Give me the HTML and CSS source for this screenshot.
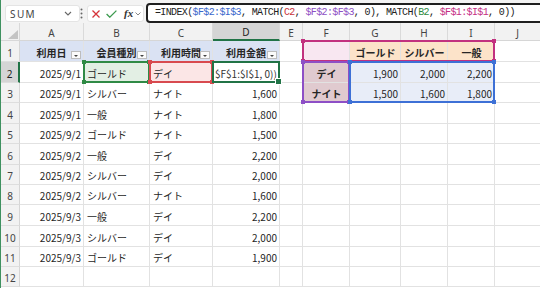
FILE: index.html
```html
<!DOCTYPE html>
<html lang="ja">
<head>
<meta charset="utf-8">
<title>Excel INDEX MATCH</title>
<link rel="stylesheet" href="styles.css">
</head>
<body>
<div class="app">
  <div class="fbar">
    <div class="namebox">
      <span class="nm">SUM</span>
      <svg class="chev" width="8" height="5" viewBox="0 0 8 5"><path d="M1 1l3 3 3-3" fill="none" stroke="#666" stroke-width="1.1"/></svg>
    </div>
    <svg class="dots" width="3" height="11" viewBox="0 0 3 11"><circle cx="1.5" cy="1.5" r="1"/><circle cx="1.5" cy="5.5" r="1"/><circle cx="1.5" cy="9.5" r="1"/></svg>
    <div class="fbtns">
      <svg class="ic-x" width="8" height="8" viewBox="0 0 8 8"><path d="M0.5 0.5l7 7M7.5 0.5l-7 7" stroke="#d6333a" stroke-width="1.3" fill="none"/></svg>
      <svg class="ic-ok" width="11" height="8" viewBox="0 0 11 8"><path d="M0.6 4l3.2 3.2 6.6-6.6" stroke="#3c9a4e" stroke-width="1.3" fill="none"/></svg>
      <span class="fx">fx</span>
      <svg class="chev2" width="6" height="4" viewBox="0 0 6 4"><path d="M0.5 0.5l2.5 2.5 2.5-2.5" fill="none" stroke="#888" stroke-width="1"/></svg>
    </div>
    <div class="formula">=INDEX(<span class="k-blue">$F$2:$I$3</span>, MATCH(<span class="k-red">C2</span>, <span class="k-purple">$F$2:$F$3</span>, 0), MATCH(<span class="k-green">B2</span>, <span class="k-mag">$F$1:$I$1</span>, 0))</div>
  </div>

  <div class="sheetwrap">
    <div class="sheet">
      <div class="corner"><svg width="10" height="9" viewBox="0 0 10 9"><path d="M10 0V9H0Z" fill="#c4c4c4"/></svg></div>
      <div class="ch">A</div><div class="ch">B</div><div class="ch">C</div><div class="ch sel">D</div><div class="ch">E</div><div class="ch">F</div><div class="ch">G</div><div class="ch">H</div><div class="ch">I</div><div class="ch">J</div>

      <div class="rh">1</div>
      <div class="c th">利用日<span class="fb"><svg width="4" height="2" viewBox="0 0 4 2"><path d="M0 0h4L2 2z" fill="#444"/></svg></span></div>
      <div class="c th">会員種別<span class="fb"><svg width="4" height="2" viewBox="0 0 4 2"><path d="M0 0h4L2 2z" fill="#444"/></svg></span></div>
      <div class="c th">利用時間<span class="fb"><svg width="4" height="2" viewBox="0 0 4 2"><path d="M0 0h4L2 2z" fill="#444"/></svg></span></div>
      <div class="c th">利用金額<span class="fb"><svg width="4" height="2" viewBox="0 0 4 2"><path d="M0 0h4L2 2z" fill="#444"/></svg></span></div>
      <div class="c"></div>
      <div class="c f1"></div>
      <div class="c gh">ゴールド</div><div class="c gh">シルバー</div><div class="c gh">一般</div>
      <div class="c"></div>

      <div class="rh sel">2</div>
      <div class="c n">2025/9/1</div>
      <div class="c b2">ゴールド</div>
      <div class="c c2">デイ</div>
      <div class="c d2">$F$1:$I$1, 0))</div>
      <div class="c"></div>
      <div class="c fh">デイ</div>
      <div class="c gv n">1,900</div><div class="c gv n">2,000</div><div class="c gv n">2,200</div>
      <div class="c"></div>

      <div class="rh">3</div>
      <div class="c n">2025/9/1</div><div class="c">シルバー</div><div class="c">ナイト</div><div class="c n">1,600</div>
      <div class="c"></div>
      <div class="c fh">ナイト</div>
      <div class="c gv n">1,500</div><div class="c gv n">1,600</div><div class="c gv n">1,800</div>
      <div class="c"></div>

      <div class="rh">4</div>
      <div class="c n">2025/9/1</div><div class="c">一般</div><div class="c">ナイト</div><div class="c n">1,800</div>
      <div class="c"></div><div class="c"></div><div class="c"></div><div class="c"></div><div class="c"></div><div class="c"></div>

      <div class="rh">5</div>
      <div class="c n">2025/9/2</div><div class="c">ゴールド</div><div class="c">ナイト</div><div class="c n">1,500</div>
      <div class="c"></div><div class="c"></div><div class="c"></div><div class="c"></div><div class="c"></div><div class="c"></div>

      <div class="rh">6</div>
      <div class="c n">2025/9/2</div><div class="c">一般</div><div class="c">デイ</div><div class="c n">2,200</div>
      <div class="c"></div><div class="c"></div><div class="c"></div><div class="c"></div><div class="c"></div><div class="c"></div>

      <div class="rh">7</div>
      <div class="c n">2025/9/2</div><div class="c">シルバー</div><div class="c">デイ</div><div class="c n">2,000</div>
      <div class="c"></div><div class="c"></div><div class="c"></div><div class="c"></div><div class="c"></div><div class="c"></div>

      <div class="rh">8</div>
      <div class="c n">2025/9/2</div><div class="c">シルバー</div><div class="c">ナイト</div><div class="c n">1,600</div>
      <div class="c"></div><div class="c"></div><div class="c"></div><div class="c"></div><div class="c"></div><div class="c"></div>

      <div class="rh">9</div>
      <div class="c n">2025/9/3</div><div class="c">一般</div><div class="c">デイ</div><div class="c n">2,200</div>
      <div class="c"></div><div class="c"></div><div class="c"></div><div class="c"></div><div class="c"></div><div class="c"></div>

      <div class="rh">10</div>
      <div class="c n">2025/9/3</div><div class="c">シルバー</div><div class="c">デイ</div><div class="c n">2,000</div>
      <div class="c"></div><div class="c"></div><div class="c"></div><div class="c"></div><div class="c"></div><div class="c"></div>

      <div class="rh">11</div>
      <div class="c n">2025/9/3</div><div class="c">ゴールド</div><div class="c">デイ</div><div class="c n">1,900</div>
      <div class="c"></div><div class="c"></div><div class="c"></div><div class="c"></div><div class="c"></div><div class="c"></div>

      <div class="rh">12</div>
      <div class="c"></div><div class="c"></div><div class="c"></div><div class="c"></div>
      <div class="c"></div><div class="c"></div><div class="c"></div><div class="c"></div><div class="c"></div><div class="c"></div>
    </div>

    <div class="marks">
      <div class="m m-b2"><i class="h tl"></i><i class="h tr"></i><i class="h bl"></i><i class="h br"></i></div>
      <div class="m m-c2"><i class="h tl"></i><i class="h tr"></i><i class="h bl"></i><i class="h br"></i></div>
      <div class="m m-d2"><i class="fill"></i></div>
      <div class="m m-f1"><i class="h tl"></i><i class="h tr"></i><i class="h bl"></i><i class="h br"></i></div>
      <div class="m m-f2"><i class="h tl"></i><i class="h tr"></i><i class="h bl"></i><i class="h br"></i></div>
      <div class="m m-g2"><i class="h tl"></i><i class="h tr"></i><i class="h bl"></i><i class="h br"></i></div>
    </div>
  </div>
</div>
</body>
</html>
```
FILE: styles.css
```css
body {
  margin: 0;
  background: #fff;
}

.app {
  width: 539px;
  height: 288px;
  overflow: hidden;
  border-left: 1px solid #3f9160;
  font-family: "Noto Sans CJK JP", "Noto Sans", sans-serif;
  font-size: 10px;
  color: #262626;
  background: #fff;
}

/* formula bar */
.fbar {
  height: 23px;
  box-sizing: border-box;
  display: flex;
  align-items: flex-start;
  background: #f3f3f3;
  padding-left: 4px;
  white-space: nowrap;
  overflow: hidden;
}

.fbar > * {
  flex: none;
}

.namebox {
  margin-top: 5px;
  width: 75px;
  height: 17px;
  box-sizing: border-box;
  background: #fff;
  border: 1px solid #e4e4e4;
  border-radius: 3px;
  display: flex;
  align-items: center;
  justify-content: space-between;
  padding: 0 7px 0 4px;
}

.nm {
  font-family: "Noto Sans", sans-serif;
  font-size: 10px;
  letter-spacing: 1.4px;
  color: #444;
}

.dots {
  margin-top: 8px;
  fill: #666;
}

.fbtns {
  margin: 5px 0 0 4px;
  width: 57px;
  height: 17px;
  box-sizing: border-box;
  background: #fff;
  border: 1px solid #e4e4e4;
  border-radius: 3px;
  display: flex;
  align-items: center;
  padding-left: 4px;
}

.ic-x { margin-right: 6px; }
.ic-ok { margin-right: 7px; }

.fx {
  font-family: "Liberation Serif", serif;
  font-style: italic;
  font-weight: bold;
  font-size: 11px;
  line-height: 11px;
  color: #333;
  margin-right: 2px;
}

.formula {
  margin: 3px 0 0 2px;
  width: 420px;
  height: 20px;
  box-sizing: border-box;
  background: #fff;
  border: 2px solid #1f1f1f;
  border-radius: 4px;
  padding-left: 7px;
  font-family: "Liberation Mono", monospace;
  font-size: 10px;
  letter-spacing: -0.63px;
  line-height: 16px;
  color: #222;
}

.k-blue { color: #3a67cc; }
.k-red { color: #c8323a; }
.k-purple { color: #8e4fc4; }
.k-green { color: #2e8a3e; }
.k-mag { color: #c42e84; }

/* sheet */
.sheetwrap {
  display: grid;
}

.sheet,
.marks {
  grid-area: 1 / 1;
  display: grid;
  grid-template-columns: 19px 64px 66px 63px 67px 23px 47px 51px 47px 47px 46px;
  grid-template-rows: 18px 21px 21px 20px 21px 20px 21px 20px 20px 21px 21px 20px 20px;
}

.sheet > div {
  box-sizing: border-box;
  min-width: 0;
  overflow: hidden;
  white-space: nowrap;
  display: flex;
  align-items: flex-end;
  line-height: 14px;
}

.corner {
  background: #f2f2f2;
  border-right: 1px solid #d8d8d8;
  border-bottom: 1px solid #d8d8d8;
  justify-content: flex-end;
  padding: 0 1px 1px 0;
}

.ch {
  background: #f2f2f2;
  border-right: 1px solid #dadada;
  border-bottom: 1px solid #d6d6d6;
  justify-content: center;
  font-family: "Noto Sans", sans-serif;
  color: #444;
  line-height: 13px !important;
}

.ch.sel {
  background: #d5d5d5;
  border-bottom: 2px solid #217346;
  color: #222;
}

.rh {
  background: #f2f2f2;
  border-right: 1px solid #d6d6d6;
  border-bottom: 1px solid #dedede;
  justify-content: center;
  font-family: "Noto Sans", sans-serif;
  color: #444;
  padding-bottom: 1px;
}

.rh.sel {
  background: #d5d5d5;
  border-right: 2px solid #217346;
  color: #222;
}

.c {
  border-right: 1px solid #e2e2e2;
  border-bottom: 1px solid #e2e2e2;
  padding: 0 2px 1px 3px;
}

.n {
  justify-content: flex-end;
}

.th {
  position: relative;
  background: #dae2f3;
  font-weight: bold;
  justify-content: center;
  padding-right: 3px;
}

.fb {
  position: absolute;
  right: 2px;
  bottom: 2px;
  width: 10px;
  height: 8px;
  box-sizing: border-box;
  border: 1px solid #bdbdbd;
  background: #fbfbfb;
  display: flex;
  align-items: center;
  justify-content: center;
  padding-top: 2px;
}

.fb svg { display: block; }

.b2 { background: #e3efe4; }
.c2 { background: #fbe6e6; }
.d2 { background: #fff; padding-left: 2px; color: #333; }

.f1 { background: #f8e7f1; }
.gh {
  background: #fce3c9;
  font-weight: bold;
  justify-content: center;
}
.fh {
  background: #e0cacf;
  font-weight: bold;
  justify-content: center;
}
.gv { background: #e8edf8; }

/* reference highlight overlays */
.marks {
  pointer-events: none;
}

.m {
  position: relative;
  box-sizing: border-box;
  margin: -1px 0 0 -1px;
  border: 2px solid currentColor;
}

.m-b2 { grid-row: 3; grid-column: 3; color: #2f8a45; }
.m-c2 { grid-row: 3; grid-column: 4; color: #d84a4f; }
.m-d2 { grid-row: 3; grid-column: 5; color: #217346; }
.m-f1 { grid-row: 2; grid-column: 7 / 11; color: #c2317f; }
.m-f2 { grid-row: 3 / 5; grid-column: 7; color: #8d4fc6; }
.m-g2 { grid-row: 3 / 5; grid-column: 8 / 11; color: #3d70d6; }

.h {
  position: absolute;
  width: 4px;
  height: 4px;
  background: currentColor;
}
.tl { left: -3px; top: -3px; }
.tr { right: -3px; top: -3px; }
.bl { left: -3px; bottom: -3px; }
.br { right: -3px; bottom: -3px; }

.fill {
  position: absolute;
  right: -4px;
  bottom: -4px;
  width: 5px;
  height: 5px;
  background: #217346;
  border: 1px solid #fff;
}
```
